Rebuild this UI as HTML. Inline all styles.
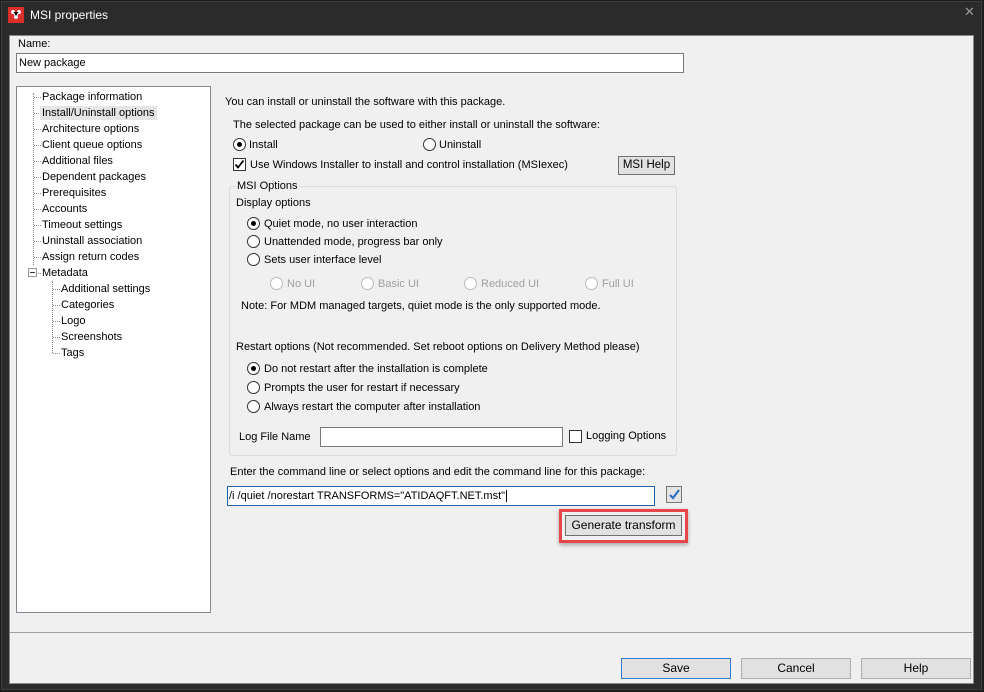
<!DOCTYPE html>
<html><head><meta charset="utf-8"><style>
*{margin:0;padding:0;box-sizing:border-box}
body{width:984px;height:692px;background:#1e1e1e;position:relative;overflow:hidden;font-family:"Liberation Sans",sans-serif;font-size:11px;color:#000}
.a{position:absolute;white-space:nowrap;line-height:14px}
.win{position:absolute;left:1px;top:1px;width:981px;height:689px;background:#2b2b2b;border:1px solid #3c3c3c}
.panel{position:absolute;left:9px;top:35px;width:965px;height:649px;background:#f0f0f0;border:1px solid #888}
.tb{position:absolute;background:#fff;border:1px solid #7a7a7a}
.rd{position:absolute;width:13px;height:13px;border:1px solid #333;border-radius:50%;background:#fff}
.rd.on::after{content:"";position:absolute;left:3px;top:3px;width:5px;height:5px;border-radius:50%;background:#000}
.rd.dis{border-color:#bbb}
.dis-t{color:#a0a0a0}
.btn{position:absolute;background:#e1e1e1;border:1px solid #adadad;text-align:center;line-height:19px;font-size:12px}
.cb{position:absolute;width:13px;height:13px;border:1px solid #333;background:#fff}
.dot{position:absolute;border-top:1px dotted #888}
.vdot{position:absolute;border-left:1px dotted #888}
</style></head><body>
<div class="win"></div>
<div style="position:absolute;left:8px;top:7px;width:16px;height:16px;background:#d9302c"></div>
<svg style="position:absolute;left:8px;top:7px" width="16" height="16"><circle cx="5" cy="5" r="2" fill="#fff"/><circle cx="11" cy="5" r="2" fill="#fff"/><circle cx="8" cy="10" r="2" fill="#fff"/><path d="M5 5L8 10L11 5" stroke="#fff" stroke-width="1"/></svg>
<div class="a" style="left:30px;top:8px;color:#fff;font-size:12px">MSI properties</div>
<div class="a" style="left:964px;top:5px;color:#999;font-size:13px">✕</div>
<div class="panel"></div>
<div class="a" style="left:18px;top:37px">Name:</div>
<div class="tb" style="left:16px;top:53px;width:668px;height:20px"></div>
<div class="a" style="left:19px;top:56px">New package</div>

<div class="tb" style="left:16px;top:86px;width:195px;height:527px;border-color:#828790"></div>
<div class="vdot" style="left:33px;top:93px;height:172px"></div>
<div style="position:absolute;left:28px;top:268px;width:9px;height:9px;border:1px solid #999;background:#fff"></div>
<div style="position:absolute;left:30px;top:272px;width:5px;height:1px;background:#333"></div>
<div class="vdot" style="left:52px;top:281px;height:72px"></div>

<div class="a" style="left:225px;top:95px">You can install or uninstall the software with this package.</div>
<div class="a" style="left:233px;top:118px">The selected package can be used to either install or uninstall the software:</div>
<div class="rd on" style="left:233px;top:138px"></div><div class="a" style="left:249px;top:138px">Install</div>
<div class="rd" style="left:423px;top:138px"></div><div class="a" style="left:439px;top:138px">Uninstall</div>
<div class="cb" style="left:233px;top:158px"></div>
<svg style="position:absolute;left:233px;top:158px" width="13" height="13"><path d="M2.5 6.5L5 9.5L10.5 2.5" stroke="#000" stroke-width="1.8" fill="none"/></svg>
<div class="a" style="left:250px;top:158px">Use Windows Installer to install and control installation (MSIexec)</div>
<div class="btn" style="left:618px;top:156px;width:57px;height:19px;border-color:#707070;line-height:17px;font-size:11.5px">MSI Help</div>

<div style="position:absolute;left:229px;top:186px;width:448px;height:270px;border:1px solid #dcdcdc;border-radius:3px"></div>
<div class="a" style="left:236px;top:179px;background:#f0f0f0;padding:0 1px">MSI Options</div>
<div class="a" style="left:236px;top:196px">Display options</div>
<div class="rd on" style="left:247px;top:217px"></div><div class="a" style="left:264px;top:217px">Quiet mode, no user interaction</div>
<div class="rd" style="left:247px;top:235px"></div><div class="a" style="left:264px;top:235px">Unattended mode, progress bar only</div>
<div class="rd" style="left:247px;top:253px"></div><div class="a" style="left:264px;top:253px">Sets user interface level</div>
<div class="rd dis" style="left:270px;top:277px"></div><div class="a dis-t" style="left:287px;top:277px">No UI</div>
<div class="rd dis" style="left:361px;top:277px"></div><div class="a dis-t" style="left:378px;top:277px">Basic UI</div>
<div class="rd dis" style="left:464px;top:277px"></div><div class="a dis-t" style="left:481px;top:277px">Reduced UI</div>
<div class="rd dis" style="left:585px;top:277px"></div><div class="a dis-t" style="left:602px;top:277px">Full UI</div>
<div class="a" style="left:241px;top:299px">Note: For MDM managed targets, quiet mode is the only supported mode.</div>
<div class="a" style="left:236px;top:340px">Restart options (Not recommended. Set reboot options on Delivery Method please)</div>
<div class="rd on" style="left:247px;top:362px"></div><div class="a" style="left:264px;top:362px">Do not restart after the installation is complete</div>
<div class="rd" style="left:247px;top:381px"></div><div class="a" style="left:264px;top:381px">Prompts the user for restart if necessary</div>
<div class="rd" style="left:247px;top:400px"></div><div class="a" style="left:264px;top:400px">Always restart the computer after installation</div>
<div class="a" style="left:239px;top:430px">Log File Name</div>
<div class="tb" style="left:320px;top:427px;width:243px;height:20px"></div>
<div class="cb" style="left:569px;top:430px"></div><div class="a" style="left:586px;top:429px">Logging Options</div>

<div class="a" style="left:230px;top:465px">Enter the command line or select options and edit the command line for this package:</div>
<div class="tb" style="left:227px;top:486px;width:428px;height:20px;border-color:#1f5fa6"></div>
<div class="a" style="left:229px;top:489px">/i /quiet /norestart TRANSFORMS="ATIDAQFT.NET.mst"<span style="border-left:1px solid #000;margin-left:1px"></span></div>
<div style="position:absolute;left:666px;top:486px;width:16px;height:17px;border:1px solid #777;background:#e4e4e4"></div>
<svg style="position:absolute;left:666px;top:486px" width="16" height="17"><path d="M4 9L7 12L13 4" stroke="#2f6fc0" stroke-width="2.2" fill="none"/></svg>
<div style="position:absolute;left:559px;top:509px;width:129px;height:34px;border:3px solid #e8454a;box-shadow:0 2px 4px rgba(0,0,0,.3)"></div>
<div class="btn" style="left:565px;top:515px;width:117px;height:21px;border-color:#707070">Generate transform</div>

<div style="position:absolute;left:10px;top:632px;width:962px;height:1px;background:#a0a0a0"></div>
<div class="btn" style="left:621px;top:658px;width:110px;height:21px;border-color:#2f7fd0">Save</div>
<div class="btn" style="left:741px;top:658px;width:110px;height:21px">Cancel</div>
<div class="btn" style="left:861px;top:658px;width:110px;height:21px">Help</div>

<div class="dot" style="left:34px;top:97px;width:7px"></div><div class="a" style="left:42px;top:90px">Package information</div>
<div class="dot" style="left:34px;top:113px;width:7px"></div><div class="a" style="left:40px;top:106px;background:#e5e5e5;padding:0 2px">Install/Uninstall options</div>
<div class="dot" style="left:34px;top:129px;width:7px"></div><div class="a" style="left:42px;top:122px">Architecture options</div>
<div class="dot" style="left:34px;top:145px;width:7px"></div><div class="a" style="left:42px;top:138px">Client queue options</div>
<div class="dot" style="left:34px;top:161px;width:7px"></div><div class="a" style="left:42px;top:154px">Additional files</div>
<div class="dot" style="left:34px;top:177px;width:7px"></div><div class="a" style="left:42px;top:170px">Dependent packages</div>
<div class="dot" style="left:34px;top:193px;width:7px"></div><div class="a" style="left:42px;top:186px">Prerequisites</div>
<div class="dot" style="left:34px;top:209px;width:7px"></div><div class="a" style="left:42px;top:202px">Accounts</div>
<div class="dot" style="left:34px;top:225px;width:7px"></div><div class="a" style="left:42px;top:218px">Timeout settings</div>
<div class="dot" style="left:34px;top:241px;width:7px"></div><div class="a" style="left:42px;top:234px">Uninstall association</div>
<div class="dot" style="left:34px;top:257px;width:7px"></div><div class="a" style="left:42px;top:250px">Assign return codes</div>
<div class="dot" style="left:38px;top:273px;width:3px"></div><div class="a" style="left:42px;top:266px">Metadata</div>
<div class="dot" style="left:53px;top:289px;width:7px"></div><div class="a" style="left:61px;top:282px">Additional settings</div>
<div class="dot" style="left:53px;top:305px;width:7px"></div><div class="a" style="left:61px;top:298px">Categories</div>
<div class="dot" style="left:53px;top:321px;width:7px"></div><div class="a" style="left:61px;top:314px">Logo</div>
<div class="dot" style="left:53px;top:337px;width:7px"></div><div class="a" style="left:61px;top:330px">Screenshots</div>
<div class="dot" style="left:53px;top:353px;width:7px"></div><div class="a" style="left:61px;top:346px">Tags</div>
</body></html>
